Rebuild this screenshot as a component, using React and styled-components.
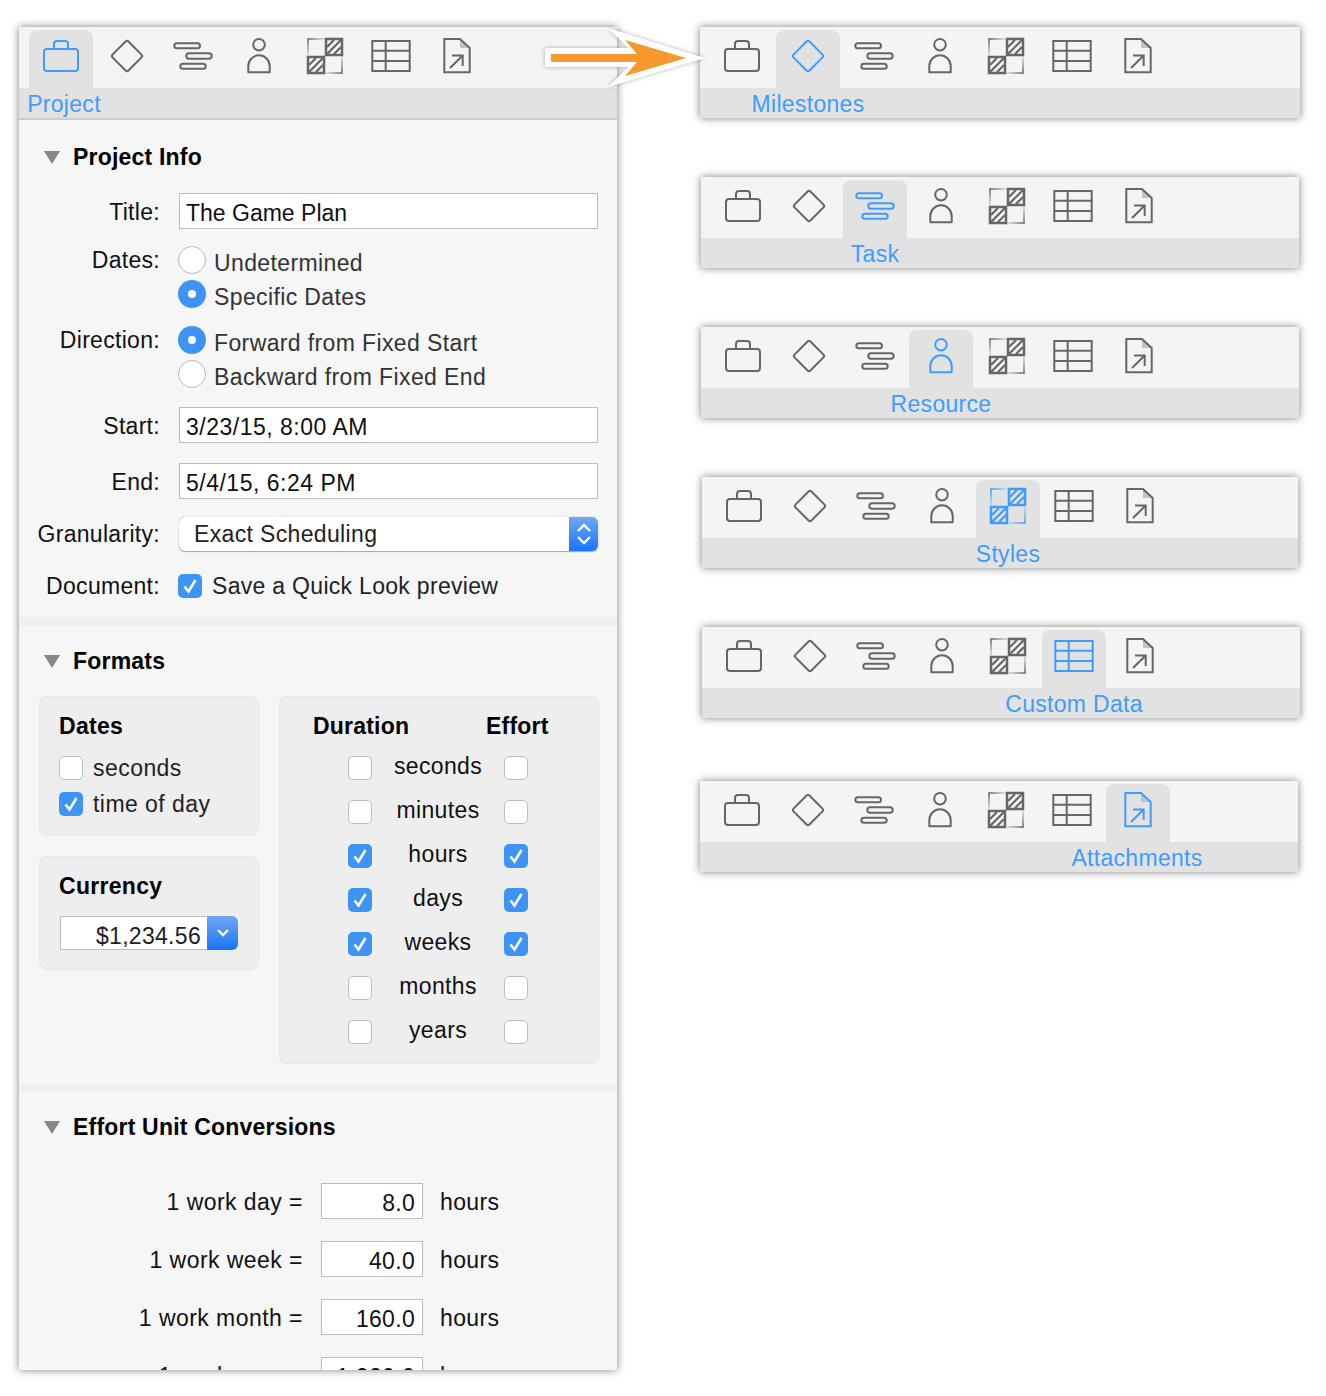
import React, { useId } from 'react';
import styled, { createGlobalStyle } from 'styled-components';

const GlobalStyle = createGlobalStyle`
  html, body {
    margin: 0;
    padding: 0;
    background: #fff;
    font-family: "Liberation Sans", Arial, sans-serif;
    font-size: 23px;
    color: #111;
  }
`;

const Page = styled.div`
  position: relative;
  width: 1326px;
  height: 1396px;
  overflow: hidden;
  display: flex;
  align-items: flex-start;
`;

const Panel = styled.div`
  width: 598px;
  height: 1343px;
  margin: 27px 0 0 19px;
  background: #f6f6f6;
  overflow: hidden;
  box-shadow: 0 0 8px rgba(0, 0, 0, 0.5);
  flex-shrink: 0;
`;

const SideColumn = styled.div`
  display: flex;
  flex-direction: column;
  margin: 27px 0 0 83px;
  gap: 59px;
`;

const Toolbar = styled.div`
  width: ${(p) => p.$width}px;
  margin-left: ${(p) => p.$x}px;
  margin-top: ${(p) => p.$extraTop || 0}px;
  box-shadow: 0 0 8px rgba(0, 0, 0, 0.5);
`;

const TabRow = styled.div`
  display: flex;
  gap: 2px;
  height: 61px;
  box-sizing: border-box;
  padding: 3px 0 0 10px;
  background: #f4f4f4;
`;

const Tab = styled.div`
  width: 64px;
  height: 58px;
  box-sizing: border-box;
  padding-top: 7px;
  display: flex;
  justify-content: center;
  border-radius: 8px 8px 0 0;
  background: ${(p) => (p.$active ? '#e2e2e2' : 'transparent')};
  color: ${(p) => (p.$active ? '#3f9cff' : '#666')};
`;

const LabelBar = styled.div`
  height: 30px;
  line-height: 33px;
  text-align: center;
  white-space: nowrap;
  background: #e2e2e2;
  color: #3f9cff;
  letter-spacing: 0.3px;
  padding-left: ${(p) => Math.max(0, p.$shift)}px;
  padding-right: ${(p) => Math.max(0, -p.$shift)}px;
  border-bottom: ${(p) => (p.$ruled ? '2px solid #ccc' : 'none')};
`;

const Section = styled.section`
  padding: ${(p) => p.$top}px 0 ${(p) => p.$bottom}px;
`;

const Divider = styled.div`
  height: ${(p) => p.$height}px;
  background: #efefef;
`;

const Heading = styled.h2`
  display: flex;
  align-items: center;
  gap: 13px;
  margin: 0 0 0 25px;
  height: 28px;
  font-size: 23px;
  font-weight: bold;
  letter-spacing: 0.2px;
  color: #000;
`;

const Disclosure = styled.span`
  width: 0;
  height: 0;
  border-left: 8.5px solid transparent;
  border-right: 8.5px solid transparent;
  border-top: 13px solid #888;
`;

const FormRow = styled.div`
  display: grid;
  grid-template-columns: 141px 1fr;
  column-gap: 19px;
  align-items: ${(p) => (p.$group ? 'start' : 'center')};
  margin-top: ${(p) => p.$top}px;
  padding-right: 19px;
`;

const FormLabel = styled.div`
  text-align: right;
  white-space: nowrap;
  line-height: 34px;
  letter-spacing: 0.3px;
  color: #111;
  position: relative;
  top: ${(p) => (p.$field ? 1 : 0)}px;
`;

const TextField = styled.div`
  height: 36px;
  line-height: 38px;
  box-sizing: border-box;
  padding: 0 7px 0 6px;
  background: #fff;
  border: 1px solid #bcbcbc;
  color: #111;
  letter-spacing: ${(p) => p.$spacing || 0}px;
  text-align: ${(p) => (p.$right ? 'right' : 'left')};
`;

const RadioRow = styled.div`
  display: flex;
  align-items: center;
  height: 34px;
  gap: 8px;
  margin-left: -1px;
`;

const RadioCircle = styled.span`
  width: 28px;
  height: 28px;
  box-sizing: border-box;
  border-radius: 50%;
  display: flex;
  align-items: center;
  justify-content: center;
  background: ${(p) => (p.$on ? '#3d94f6' : '#fff')};
  border: ${(p) => (p.$on ? 'none' : '1px solid #b8b8b8')};
  &::after {
    content: '';
    display: ${(p) => (p.$on ? 'block' : 'none')};
    width: 8px;
    height: 8px;
    border-radius: 50%;
    background: #fff;
  }
`;

const OptionText = styled.span`
  color: #333;
  letter-spacing: 0.38px;
  white-space: nowrap;
  position: relative;
  top: 3px;
`;

const Select = styled.div`
  height: 34px;
  display: flex;
  background: #fff;
  border-radius: 6px;
  box-shadow: 0 0 1px rgba(0, 0, 0, 0.45), 0 1px 1px rgba(0, 0, 0, 0.3);
  overflow: hidden;
`;

const SelectText = styled.div`
  flex: 1;
  padding-left: 15px;
  line-height: 35px;
  letter-spacing: 0.35px;
  color: #222;
`;

const BlueButton = styled.div`
  width: ${(p) => p.$width}px;
  display: flex;
  align-items: center;
  justify-content: center;
  background: linear-gradient(#6ea9f2, #1a73fb);
  color: #fff;
`;

const CheckRow = styled.div`
  display: flex;
  align-items: center;
  gap: 10px;
  margin-left: -1px;
  letter-spacing: 0.3px;
  color: #222;
  height: 34px;
  white-space: nowrap;
`;

const Box = styled.span`
  width: 24px;
  height: 24px;
  box-sizing: border-box;
  border-radius: 5px;
  display: flex;
  align-items: center;
  justify-content: center;
  flex-shrink: 0;
  color: #fff;
  background: ${(p) => (p.$on ? '#3d94f6' : '#fff')};
  border: ${(p) => (p.$on ? 'none' : '1px solid #bdbdbd')};
`;

const FormatColumns = styled.div`
  display: flex;
  gap: 20px;
  margin: 21px 0 0 20px;
`;

const LeftCards = styled.div`
  display: flex;
  flex-direction: column;
  gap: 20px;
`;

const Card = styled.div`
  width: ${(p) => p.$width}px;
  height: ${(p) => p.$height}px;
  box-sizing: border-box;
  padding-top: 15px;
  background: #eeeeee;
  border: 1px solid #e7e7e7;
  border-radius: 8px;
`;

const CardTitle = styled.div`
  height: 28px;
  line-height: 28px;
  padding-left: 19px;
  font-weight: bold;
  letter-spacing: 0.3px;
  color: #000;
`;

const CardChecks = styled.div`
  margin-top: 10px;
  padding-left: 19px;
`;

const CardCheck = styled.div`
  display: flex;
  align-items: center;
  gap: 10px;
  height: 36px;
  letter-spacing: 0.45px;
  color: #222;
`;

const CurrencyField = styled.div`
  display: flex;
  height: 34px;
  width: 178px;
  margin: 16px 0 0 20px;
`;

const CurrencyValue = styled.div`
  flex: 1;
  box-sizing: border-box;
  padding-right: 6px;
  text-align: right;
  line-height: 39px;
  letter-spacing: 0.3px;
  color: #222;
  background: #fff;
  border: 1px solid #bcbcbc;
  border-right: none;
`;

const CurrencyButton = styled(BlueButton)`
  border-radius: 0 6px 6px 0;
`;

const MatrixHeader = styled.div`
  display: grid;
  grid-template-columns: 173px auto;
  height: 28px;
  line-height: 28px;
  padding-left: 33px;
  font-weight: bold;
  letter-spacing: 0.2px;
  color: #000;
`;

const MatrixRows = styled.div`
  margin-top: 6px;
  padding-left: 68px;
`;

const MatrixRow = styled.div`
  display: grid;
  grid-template-columns: 24px 132px 24px;
  align-items: center;
  height: 44px;
`;

const MatrixLabel = styled.span`
  text-align: center;
  letter-spacing: 0.35px;
  position: relative;
  top: -2px;
  color: #111;
`;

const ConversionRows = styled.div`
  display: flex;
  flex-direction: column;
  gap: 22px;
  margin-top: 42px;
`;

const ConversionRow = styled.div`
  display: grid;
  grid-template-columns: 284px 102px auto;
  column-gap: 18px;
  align-items: center;
  height: 36px;
`;

const ConversionLabel = styled.div`
  text-align: right;
  letter-spacing: 0.45px;
  white-space: nowrap;
  position: relative;
  top: 1px;
`;

const Unit = styled.div`
  margin-left: -1px;
  letter-spacing: 0.35px;
  position: relative;
  top: 1px;
`;

const ArrowOverlay = styled.svg`
  position: absolute;
  left: 540px;
  top: 22px;
  filter: drop-shadow(0 0 2px rgba(0, 0, 0, 0.3));
`;

const Hatch = ({ x, y }) => (
  <g fill="none" stroke="currentColor">
    <path strokeWidth="2.5" d={`M${x + 1} ${y + 1}h16v16h-16z`} />
    <path strokeWidth="2.2" d={`M${x + 2} ${y + 9}l7-7M${x + 2} ${y + 16}l14-14M${x + 9} ${y + 16}l7-7`} />
  </g>
);

const StylesIcon = () => {
  const id = useId();
  return (
    <>
      <defs>
        <radialGradient id={`${id}a`} gradientUnits="userSpaceOnUse" cx="7" cy="2" r="20">
          <stop offset="0" stopColor="currentColor" stopOpacity="0.8" />
          <stop offset="1" stopColor="currentColor" stopOpacity="0" />
        </radialGradient>
        <radialGradient id={`${id}b`} gradientUnits="userSpaceOnUse" cx="41" cy="36" r="20">
          <stop offset="0" stopColor="currentColor" stopOpacity="0.8" />
          <stop offset="1" stopColor="currentColor" stopOpacity="0" />
        </radialGradient>
      </defs>
      <path d="M7 19V2H24" fill="none" stroke={`url(#${id}a)`} strokeWidth="2" />
      <path d="M41 19V36H24" fill="none" stroke={`url(#${id}b)`} strokeWidth="2" />
      <Hatch x={24} y={1} />
      <Hatch x={6} y={19} />
    </>
  );
};

const icons = {
  project: (
    <g fill="none" stroke="currentColor" strokeWidth="2">
      <rect x="7" y="12" width="34" height="22" rx="3" />
      <path d="M17 11V7q0-3 3-3h8q3 0 3 3v4" />
    </g>
  ),
  milestone: (
    <rect x="12.75" y="7.75" width="22.5" height="22.5" rx="2" fill="none" stroke="currentColor" strokeWidth="2" transform="rotate(45 24 19)" />
  ),
  task: (
    <g fill="none" stroke="currentColor" strokeWidth="2">
      <rect x="5.3" y="6.3" width="25.7" height="5" rx="2.5" />
      <rect x="17.3" y="16.3" width="25.4" height="5.4" rx="2.7" />
      <rect x="11.3" y="26.7" width="25.4" height="5" rx="2.5" />
    </g>
  ),
  resource: (
    <g fill="none" stroke="currentColor" strokeWidth="2" strokeLinejoin="round">
      <circle cx="24" cy="7.7" r="5.8" />
      <path d="M13.3 35.3V29a10.7 10.7 0 0 1 21.4 0v6.3z" />
    </g>
  ),
  styles: <StylesIcon />,
  data: (
    <g fill="none" stroke="currentColor" strokeWidth="2">
      <rect x="5.3" y="4" width="37.4" height="30" />
      <path d="M5.3 13.7h37.4M5.3 24h37.4M18.7 4v30" />
    </g>
  ),
  attachment: (
    <g fill="none" stroke="currentColor" strokeWidth="2">
      <path d="M27 2v9h9.7z" fill="currentColor" fillOpacity="0.35" stroke="none" />
      <path d="M27 2H11.3v33.3h25.4V11z" />
      <path d="M17 31l12.7-12.5M19 18.5h10.7V29" />
    </g>
  ),
};

const order = ['project', 'milestone', 'task', 'resource', 'styles', 'data', 'attachment'];

const TabIcons = ({ active }) => (
  <TabRow>
    {order.map((name) => (
      <Tab key={name} $active={name === active}>
        <svg width="48" height="40" viewBox="0 0 48 40">{icons[name]}</svg>
      </Tab>
    ))}
  </TabRow>
);

const Check = () => (
  <svg width="16" height="16" viewBox="0 0 16 16">
    <path d="M2.5 8.5l4 5L13.5 2" fill="none" stroke="currentColor" strokeWidth="2.6" />
  </svg>
);

const Checkbox = ({ on }) => <Box $on={on}>{on && <Check />}</Box>;

const Radio = ({ on, children }) => (
  <RadioRow>
    <RadioCircle $on={on} />
    <OptionText>{children}</OptionText>
  </RadioRow>
);

const toolbars = [
  { active: 'milestone', label: 'Milestones', width: 600, x: 0, shift: -384 },
  { active: 'task', label: 'Task', width: 598, x: 1, shift: -250 },
  { active: 'resource', label: 'Resource', width: 598, x: 1, shift: -118 },
  { active: 'styles', label: 'Styles', width: 596, x: 2, shift: 16 },
  { active: 'data', label: 'Custom Data', width: 598, x: 2, shift: 146 },
  { active: 'attachment', label: 'Attachments', width: 598, x: 0, shift: 276, extraTop: 4 },
];

const units = [
  ['seconds', false, false],
  ['minutes', false, false],
  ['hours', true, true],
  ['days', true, true],
  ['weeks', true, true],
  ['months', false, false],
  ['years', false, false],
];

const conversions = [
  ['1 work day =', '8.0'],
  ['1 work week =', '40.0'],
  ['1 work month =', '160.0'],
  ['1 work year =', '1,920.0'],
];

export default function App() {
  return (
    <Page>
      <GlobalStyle />
      <Panel>
        <TabIcons active="project" />
        <LabelBar $shift={-508} $ruled>Project</LabelBar>

        <Section $top={23} $bottom={14}>
          <Heading><Disclosure />Project Info</Heading>
          <FormRow $top={22}>
            <FormLabel $field>Title:</FormLabel>
            <TextField>The Game Plan</TextField>
          </FormRow>
          <FormRow $top={14} $group>
            <FormLabel>Dates:</FormLabel>
            <div>
              <Radio>Undetermined</Radio>
              <Radio on>Specific Dates</Radio>
            </div>
          </FormRow>
          <FormRow $top={12} $group>
            <FormLabel>Direction:</FormLabel>
            <div>
              <Radio on>Forward from Fixed Start</Radio>
              <Radio>Backward from Fixed End</Radio>
            </div>
          </FormRow>
          <FormRow $top={16}>
            <FormLabel $field>Start:</FormLabel>
            <TextField $spacing={0.5}>3/23/15, 8:00 AM</TextField>
          </FormRow>
          <FormRow $top={20}>
            <FormLabel $field>End:</FormLabel>
            <TextField $spacing={0.5}>5/4/15, 6:24 PM</TextField>
          </FormRow>
          <FormRow $top={18}>
            <FormLabel>Granularity:</FormLabel>
            <Select>
              <SelectText>Exact Scheduling</SelectText>
              <BlueButton $width={29}>
                <svg width="16" height="24" viewBox="0 0 16 24">
                  <path d="M2 9l6-6 6 6M2 15l6 6 6-6" fill="none" stroke="currentColor" strokeWidth="2.4" />
                </svg>
              </BlueButton>
            </Select>
          </FormRow>
          <FormRow $top={18}>
            <FormLabel>Document:</FormLabel>
            <CheckRow><Checkbox on />Save a Quick Look preview</CheckRow>
          </FormRow>
        </Section>
        <Divider $height={9} />

        <Section $top={21} $bottom={20}>
          <Heading><Disclosure />Formats</Heading>
          <FormatColumns>
            <LeftCards>
              <Card $width={220} $height={140}>
                <CardTitle>Dates</CardTitle>
                <CardChecks>
                  <CardCheck><Checkbox />seconds</CardCheck>
                  <CardCheck><Checkbox on />time of day</CardCheck>
                </CardChecks>
              </Card>
              <Card $width={220} $height={114}>
                <CardTitle>Currency</CardTitle>
                <CurrencyField>
                  <CurrencyValue>$1,234.56</CurrencyValue>
                  <CurrencyButton $width={31}>
                    <svg width="14" height="10" viewBox="0 0 14 10">
                      <path d="M2 2l5 5 5-5" fill="none" stroke="currentColor" strokeWidth="2.4" />
                    </svg>
                  </CurrencyButton>
                </CurrencyField>
              </Card>
            </LeftCards>
            <Card $width={320} $height={368}>
              <MatrixHeader>
                <span>Duration</span>
                <span>Effort</span>
              </MatrixHeader>
              <MatrixRows>
                {units.map(([name, duration, effort]) => (
                  <MatrixRow key={name}>
                    <Checkbox on={duration} />
                    <MatrixLabel>{name}</MatrixLabel>
                    <Checkbox on={effort} />
                  </MatrixRow>
                ))}
              </MatrixRows>
            </Card>
          </FormatColumns>
        </Section>
        <Divider $height={8} />

        <Section $top={21} $bottom={0}>
          <Heading><Disclosure />Effort Unit Conversions</Heading>
          <ConversionRows>
            {conversions.map(([label, value]) => (
              <ConversionRow key={label}>
                <ConversionLabel>{label}</ConversionLabel>
                <TextField $right $spacing={0.3}>{value}</TextField>
                <Unit>hours</Unit>
              </ConversionRow>
            ))}
          </ConversionRows>
        </Section>
      </Panel>

      <SideColumn>
        {toolbars.map((t) => (
          <Toolbar key={t.active} $width={t.width} $x={t.x} $extraTop={t.extraTop}>
            <TabIcons active={t.active} />
            <LabelBar $shift={t.shift}>{t.label}</LabelBar>
          </Toolbar>
        ))}
      </SideColumn>

      <ArrowOverlay width="170" height="72" viewBox="0 0 170 72">
        <path d="M5 26H88L68 6L165 36L68 65L88 45H5z" fill="#fff" />
        <path d="M11 32H97L85 18L146 36L85 54L97 40H11z" fill="#f6972f" />
      </ArrowOverlay>
    </Page>
  );
}
